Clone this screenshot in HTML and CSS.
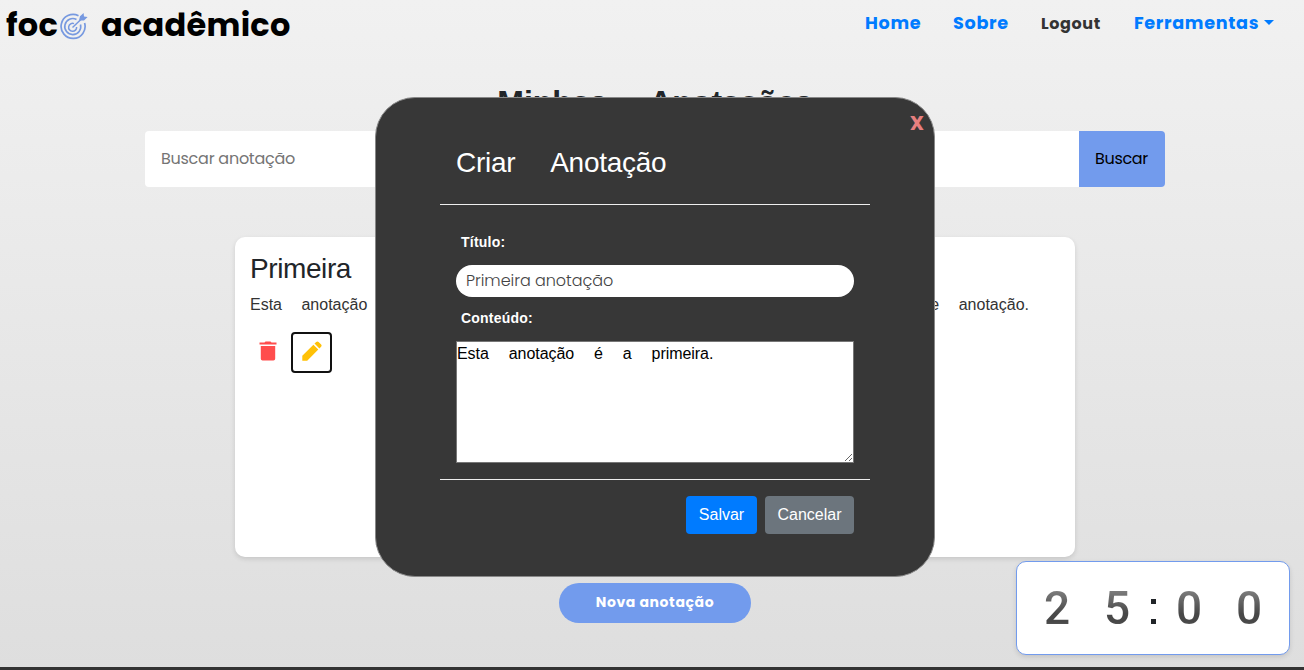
FILE: index.html
```html
<!DOCTYPE html>
<html lang="pt-BR">
<head>
<meta charset="utf-8">
<title>Foco Acadêmico</title>
<link rel="stylesheet" href="styles.css">
</head>
<body>
<div class="page">
  <header class="navbar">
    <div class="brand"><span class="brand-a">foc</span><svg class="target" viewBox="0 0 28 28" fill="none" stroke="#7799e0"><path d="M18.500 3.700A12 12 0 1 0 24.600 11" stroke-width="1.700"/><path d="M16.500 7.500A8 8 0 1 0 20.500 12.500" stroke-width="1.600"/><path d="M14 11.600A4 4 0 1 0 16.600 15" stroke-width="1.500"/><path d="M12.500 15.500L23 5.500" stroke-width="1.500"/><path d="M19 8.500L20 4.200L23.600 1L24 4.400L27.600 5L24 8.400Z" fill="#7799e0" stroke="none"/></svg><span class="brand-b">acadêmico</span></div>
    <nav class="links">
      <a class="link home">Home</a>
      <a class="link sobre">Sobre</a>
      <a class="link logout">Logout</a>
      <a class="link tools">Ferramentas</a><i class="caret"></i>
    </nav>
  </header>
  <main class="main">
    <h2 class="title">Minhas Anotações</h2>
    <div class="search"><div class="search-input"><span>Buscar anotação</span></div><button class="search-btn"><span>Buscar</span></button></div>
    <article class="card">
      <h3 class="card-title">Primeira</h3>
      <div class="card-text"><span>Esta anotação</span><span>de anotação.</span></div>
      <div class="actions">
        <span class="icon"><svg viewBox="0 0 18 20" width="18" height="20" fill="#ff4d4d"><path d="M.5 1.500h5l1-1.100h5l1 1.100h5v2H.5zM1.800 5h14.400v12.700q0 1.800-1.800 1.800H3.600q-1.800 0-1.800-1.800z"/></svg></span>
        <span class="icon focused"><svg viewBox="0 0 20 20" width="20" height="20" fill="#ffc107"><path d="M.3 19.700v-4.900L11.400 3.700l4.900 4.900L5.200 19.700zM12.500 2.600l1.700-1.700q1.200-1 2.400 0l2.500 2.500q1 1.200 0 2.400l-1.700 1.700z"/></svg></span>
      </div>
    </article>
    <button class="new-note"><span>Nova anotação</span></button>
  </main>
  <footer class="footer"></footer>
  <section class="modal">
    <span class="close">X</span>
    <h3 class="modal-title">Criar Anotação</h3>
    <div class="modal-body">
      <label class="label">Título:</label>
      <div class="field"><span>Primeira anotação</span></div>
      <label class="label second">Conteúdo:</label>
      <textarea class="area" spellcheck="false">Esta anotação é a primeira.</textarea>
    </div>
    <div class="modal-foot"><button class="btn save">Salvar</button><button class="btn cancel">Cancelar</button></div>
  </section>
  <aside class="timer"><span class="digit">2</span><span class="digit">5</span><span class="colon"><i></i><i></i></span><span class="digit">0</span><span class="digit">0</span></aside>
</div>
</body>
</html>
```
FILE: styles.css
```css
* { box-sizing: border-box; }
body { margin: 0; height: 670px; overflow: hidden; font-family: "Liberation Sans", Arial, sans-serif; color: #212529; background: linear-gradient(#f1f1f1, #dedede); }
h2, h3 { margin: 0; }
button { border: 0; padding: 0; font-family: inherit; }
.page { position: relative; width: 1310px; height: 670px; display: flex; flex-direction: column; }
.brand, .link, .search, .new-note, .field, .close { font-family: Poppins, Inter, "Open Sans", sans-serif; white-space: nowrap; }
.navbar { height: 50px; display: flex; justify-content: space-between; padding: 0 36px 0 6px; }
.brand { display: flex; align-items: center; height: 50px; font-size: 32px; font-weight: 700; color: #000; letter-spacing: .25px; }
.brand-a { width: 54px; }
.target { width: 28px; height: 28px; margin-top: 1px; }
.brand-b { margin-left: 13px; }
.links { display: flex; align-items: center; height: 45px; color: #007bff; }
.link { font-size: 17.6px; font-weight: 700; letter-spacing: .68px; }
.home { width: 88px; }
.sobre { width: 88px; }
.logout { width: 93px; font-size: 16px; color: #333; letter-spacing: .6px; padding-top: 1px; }
.tools { width: 130px; }
.caret { border: 5px solid transparent; border-top-color: #007bff; border-bottom: 0; }
.main { flex: 1; display: flex; flex-direction: column; align-items: center; }
.title { margin-top: 33px; height: 48px; font-size: 32px; line-height: 38px; word-spacing: 34px; }
.search { display: flex; width: 1020px; height: 56px; border-radius: 4px; overflow: hidden; font-size: 16px; }
.search-input { flex: 1; background: #fff; padding-left: 16px; line-height: 56px; color: #757575; letter-spacing: -.26px; }
.search-btn { width: 86px; font: inherit; background: #729bed; color: #000; letter-spacing: -.3px; padding: 0 1px 2px 0; }
.card { width: 840px; height: 320px; margin-top: 50px; padding: 15px; border-radius: 10px; background: #fff; box-shadow: 0 2px 5px rgba(0,0,0,.12); }
.card-title { font-size: 28px; line-height: 34px; font-weight: 400; letter-spacing: -.4px; }
.card-text { display: flex; justify-content: space-between; margin-top: 7px; padding-right: 31px; font-size: 16px; line-height: 24px; word-spacing: 15px; color: #333; }
.actions { display: flex; gap: 5px; margin-top: 15px; }
.icon { width: 36px; height: 41px; display: flex; align-items: center; justify-content: center; padding-bottom: 3px; }
.focused { width: 41px; border: 2px solid #111; border-radius: 4px; }
.new-note { width: 192px; height: 40px; margin-top: 26px; border-radius: 20px; background: #729bed; color: #fff; font-size: 14px; font-weight: 700; letter-spacing: .6px; padding-bottom: 2px; }
.footer { height: 3px; background: #333; }
.modal { position: absolute; left: 375px; top: 97px; width: 560px; height: 480px; padding: 41px 64px; border: 1px solid #888; border-radius: 40px; background: #373737; color: #fff; }
.close { position: absolute; right: 10px; top: 10px; font-size: 20px; line-height: 30px; font-weight: 700; color: #e77f7f; }
.modal-title { height: 66px; padding: 7px 16px; border-bottom: 1px solid #eee; font-size: 28px; line-height: 34px; font-weight: 400; word-spacing: 29px; letter-spacing: -.28px; }
.modal-body { height: 275px; padding: 27px 16px 0; border-bottom: 1px solid #eee; }
.label { display: block; height: 33px; padding-left: 5px; font-size: 14px; line-height: 20px; font-weight: 700; letter-spacing: .22px; }
.field { height: 32px; border-radius: 16px; padding-left: 10px; background: #fff; color: #444; font-weight: 300; font-size: 16px; line-height: 31px; letter-spacing: -.05px; }
.second { margin-top: 11px; }
.area { display: block; width: 398px; height: 122px; padding: 0; border: 1px solid #767676; font: 16px/24px "Liberation Sans", Arial, sans-serif; word-spacing: 15.500px; letter-spacing: -.05px; color: #000; background: #fff; }
.modal-foot { display: flex; justify-content: flex-end; gap: 8px; padding: 16px 16px 0; }
.btn { height: 38px; border-radius: 4px; color: #fff; font-size: 16px; }
.save { width: 71px; background: #007bff; }
.cancel { width: 89px; background: #6c757d; }
.timer { position: absolute; left: 1016px; top: 561px; width: 274px; height: 94px; display: flex; align-items: center; padding-left: 10px; border: 1px solid #729bed; border-radius: 10px; background: #fff; box-shadow: 0 2px 5px rgba(0,0,0,.12); }
.digit { width: 60px; text-align: center; font: 500 46px/56px Roboto, sans-serif; color: transparent; background: linear-gradient(#888 10%, #484848 60%, #484848 75%, #666 85%); background-clip: text; -webkit-background-clip: text; }
.colon { width: 12px; display: flex; flex-direction: column; align-items: center; gap: 15px; margin-top: 6px; }
.colon i { width: 5px; height: 5px; background: #212529; }
```
